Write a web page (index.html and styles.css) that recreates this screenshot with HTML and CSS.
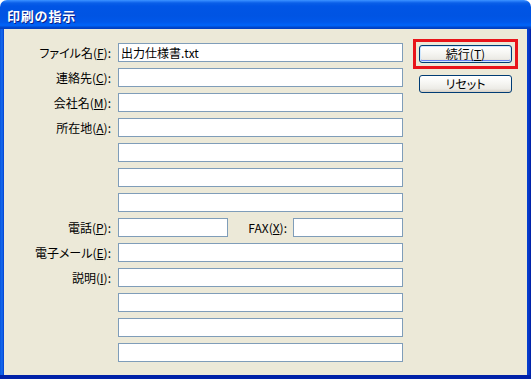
FILE: index.html
```html
<!DOCTYPE html>
<html lang="ja">
<head>
<meta charset="utf-8">
<title>印刷の指示</title>
<link rel="stylesheet" href="styles.css">
</head>
<body>
<div class="window">
  <div class="titlebar"><span class="title">印刷の指示</span></div>
  <div class="frame">
    <div class="client">
      <div class="form">
        <label class="lbl">ファイル名(<u>F</u>):</label>
        <div class="field">出力仕様書.txt</div>
        <label class="lbl">連絡先(<u>C</u>):</label>
        <div class="field"></div>
        <label class="lbl">会社名(<u>M</u>):</label>
        <div class="field"></div>
        <label class="lbl">所在地(<u>A</u>):</label>
        <div class="field"></div>
        <span></span>
        <div class="field"></div>
        <span></span>
        <div class="field"></div>
        <span></span>
        <div class="field"></div>
        <label class="lbl">電話(<u>P</u>):</label>
        <div class="split">
          <div class="field short"></div>
          <label class="lbl fax">FAX(<u>X</u>):</label>
          <div class="field short"></div>
        </div>
        <label class="lbl">電子メール(<u>E</u>):</label>
        <div class="field"></div>
        <label class="lbl">説明(<u>I</u>):</label>
        <div class="field"></div>
        <span></span>
        <div class="field"></div>
        <span></span>
        <div class="field"></div>
        <span></span>
        <div class="field"></div>
      </div>
      <div class="buttons">
        <div class="highlight">
          <button class="btn focus">続行(<u>T</u>)</button>
        </div>
        <button class="btn">リセット</button>
      </div>
    </div>
  </div>
</div>
</body>
</html>
```
FILE: styles.css
```css
html, body {
  margin: 0;
  padding: 0;
  background: #ffffff;
}
body {
  font-family: "Noto Sans CJK JP", "Noto Sans", sans-serif;
  font-size: 12px;
  color: #000;
}
.window {
  width: 531px;
  height: 379px;
  display: flex;
  flex-direction: column;
}
.titlebar {
  height: 29px;
  box-sizing: border-box;
  border-radius: 7px 7px 0 0;
  background: linear-gradient(to bottom,
    #3d95ff 0px, #2a80fb 1px, #0a5fe8 3px, #0055e5 6px,
    #0054e3 16px, #0058ea 22px, #0063f8 25px, #0060f0 26px,
    #0049d0 27px, #003ec0 29px);
  padding-left: 7px;
  display: flex;
  align-items: center;
}
.title {
  color: #fff;
  font-weight: bold;
  font-size: 13px;
  letter-spacing: 0.8px;
  text-shadow: 1px 1px 0 #0a1f8a;
  line-height: 1;
  margin-top: 1px;
}
.frame {
  flex: 1;
  display: flex;
  padding: 0 4px 4px 4px;
  background: linear-gradient(to right, #0855dd 0, #166aee 2px, #0040d0 4px, #0040d0 calc(100% - 4px), #0836c8 calc(100% - 2px), #001ea0 100%);
  box-shadow: inset 0 -4px 0 #0021a8;
}
.client {
  flex: 1;
  background: #ece9d8;
  display: flex;
  align-items: flex-start;
  padding-top: 14px;
}
.form {
  display: grid;
  grid-template-columns: 107px 285px;
  grid-auto-rows: 19px;
  column-gap: 7px;
  row-gap: 6px;
}
.lbl {
  text-align: right;
  line-height: 19px;
  font-feature-settings: "palt";
  white-space: nowrap;
}
.lbl u {
  text-underline-offset: 1px;
}
.field {
  box-sizing: border-box;
  height: 19px;
  border: 1px solid #7f9db9;
  background: #fff;
  line-height: 17px;
  padding-left: 2px;
  font-feature-settings: "palt";
}
.split {
  display: flex;
}
.field.short {
  width: 110px;
}
.lbl.fax {
  flex: 1;
  padding-right: 6px;
}
.buttons {
  display: flex;
  flex-direction: column;
  margin-left: 16px;
  margin-top: 2px;
  gap: 12px;
}
.highlight {
  display: flex;
  border: 3px solid #e8141a;
  padding: 3px;
  margin: -6px;
}
.btn {
  box-sizing: border-box;
  width: 93px;
  height: 18px;
  border: 1px solid #003c74;
  border-radius: 3px;
  background: linear-gradient(to bottom, #ffffff 0%, #f7f7f4 40%, #ecebe6 80%, #d6d0c5 100%);
  font-family: "Noto Sans CJK JP", "Noto Sans", sans-serif;
  font-size: 12px;
  line-height: 16px;
  padding: 0;
  color: #000;
  font-feature-settings: "palt";
}
.btn.focus {
  box-shadow: inset 0 0 0 1px #cee7ff, inset 0 -1px 0 1px #6982ee;
}
```
